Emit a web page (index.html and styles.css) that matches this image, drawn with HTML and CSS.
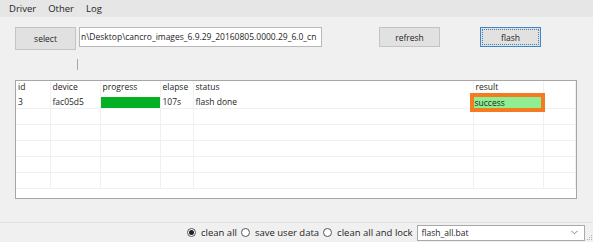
FILE: index.html
```html
<!DOCTYPE html>
<html lang="en">
<head>
<meta charset="UTF-8" />
<title>Flash Tool</title>
<link rel="stylesheet" href="styles.css">
</head>
<body>
  <div class="window">
    <div class="menubar">
      <span class="menu-item">Driver</span>
      <span class="menu-item">Other</span>
      <span class="menu-item">Log</span>
    </div>

    <div class="toolbar">
      <button class="btn btn-select">select</button>
      <div class="path-field">n\Desktop\cancro_images_6.9.29_20160805.0000.29_6.0_cn</div>
      <button class="btn btn-refresh">refresh</button>
      <button class="btn btn-flash">flash</button>
    </div>

    <div class="tick"></div>

    <div class="list">
      <table>
        <colgroup>
          <col class="c-id"><col class="c-device"><col class="c-progress"><col class="c-elapse"><col class="c-status"><col class="c-result"><col>
        </colgroup>
        <thead>
          <tr><th>id</th><th>device</th><th>progress</th><th>elapse</th><th>status</th><th>result</th><th></th></tr>
        </thead>
        <tbody>
          <tr>
            <td>3</td><td>fac05d5</td>
            <td><div class="bar"></div></td>
            <td>107s</td><td>flash done</td>
            <td><span class="result-ok">success</span></td><td></td>
          </tr>
          <tr class="empty"><td></td><td></td><td></td><td></td><td></td><td></td><td></td></tr>
          <tr class="empty"><td></td><td></td><td></td><td></td><td></td><td></td><td></td></tr>
          <tr class="empty"><td></td><td></td><td></td><td></td><td></td><td></td><td></td></tr>
          <tr class="empty"><td></td><td></td><td></td><td></td><td></td><td></td><td></td></tr>
          <tr class="empty"><td></td><td></td><td></td><td></td><td></td><td></td><td></td></tr>
        </tbody>
      </table>
    </div>

    <div class="spacer"></div>

    <div class="statusbar">
      <span class="radio checked"></span><span class="radio-label">clean all</span>
      <span class="radio"></span><span class="radio-label">save user data</span>
      <span class="radio"></span><span class="radio-label">clean all and lock</span>
      <div class="combo">
        <span>flash_all.bat</span>
        <svg class="chevron" viewBox="0 0 8 5"><path d="M0.5 0.5 L4 4 L7.5 0.5" fill="none" stroke="#777" stroke-width="1"/></svg>
      </div>
      <svg class="grip" viewBox="0 0 6 6">
        <rect x="4" y="0" width="1" height="1" fill="#b5b5b5"/>
        <rect x="2" y="2" width="1" height="1" fill="#b5b5b5"/>
        <rect x="4" y="2" width="1" height="1" fill="#b5b5b5"/>
        <rect x="0" y="4" width="1" height="1" fill="#b5b5b5"/>
        <rect x="2" y="4" width="1" height="1" fill="#b5b5b5"/>
        <rect x="4" y="4" width="1" height="1" fill="#b5b5b5"/>
      </svg>
    </div>
  </div>
</body>
</html>
```

FILE: styles.css
```css
body {
  margin: 0;
  background: #fff;
  font-family: "Open Sans", "Noto Sans", sans-serif;
  color: #1e1e1e;
}

.window {
  width: 593px;
  height: 242px;
  background: #f0f0f0;
  display: flex;
  flex-direction: column;
}

.menubar {
  height: 17px;
  background: #e6e6e6;
  display: flex;
  align-items: center;
  padding-left: 9px;
  font-size: 9.5px;
}

.menu-item {
  margin-right: 12px;
}

.toolbar {
  display: flex;
  align-items: flex-start;
  padding: 10px 0 0 15px;
}

.btn {
  font-family: inherit;
  font-size: 8.5px;
  color: #1e1e1e;
  background: #e1e1e1;
  border: 1px solid #c4c4c4;
  width: 61px;
  height: 20px;
  padding: 0;
}

.btn-select {
  height: 23px;
}

.path-field {
  margin-left: 3px;
  width: 243px;
  height: 20px;
  box-sizing: border-box;
  background: #fff;
  border: 1px solid #b9b9b9;
  font-size: 8.5px;
  line-height: 17px;
  padding-left: 1px;
  white-space: nowrap;
  overflow: hidden;
}

.btn-refresh {
  margin-left: 57px;
}

.btn-flash {
  margin-left: 40px;
  border: 1px solid #3d86cc;
  outline: 1px dotted #4d7fae;
  outline-offset: -3px;
}

.tick {
  width: 1px;
  height: 11px;
  background: #a8a8a8;
  margin: 9px 0 0 77px;
}

.list {
  margin: 10px 0 0 15px;
  width: 562px;
  height: 119px;
  box-sizing: border-box;
  background: #fff;
  border: 1px solid #a6a6a6;
  overflow: hidden;
}

table {
  width: 100%;
  border-collapse: collapse;
  table-layout: fixed;
  font-size: 8.5px;
}

.c-id { width: 34px; }
.c-device { width: 50px; }
.c-progress { width: 60px; }
.c-elapse { width: 33px; }
.c-status { width: 280px; }
.c-result { width: 70px; }

th, td {
  padding: 0 0 0 2px;
  text-align: left;
  font-weight: normal;
  border-right: 1px solid #f0f0f0;
  white-space: nowrap;
}

th {
  height: 12px;
  line-height: 12px;
  vertical-align: bottom;
}

td {
  height: 15px;
  line-height: 13px;
  border-bottom: 1px solid #f0f0f0;
  vertical-align: bottom;
}

.bar {
  height: 11px;
  margin: 0 0 0 -2px;
  width: 59px;
  background: #06b025;
}

.result-ok {
  display: block;
  width: 67px;
  height: 11px;
  line-height: 11px;
  margin-left: -2px;
  padding-left: 1px;
  box-sizing: border-box;
  background: #90ee90;
  outline: 4px solid #f57b20;
}

.spacer {
  flex: 1;
}

.statusbar {
  height: 19px;
  border-top: 1px solid #e2e2e2;
  display: flex;
  align-items: center;
  padding-left: 187px;
  font-size: 9.5px;
  position: relative;
}

.radio {
  width: 9px;
  height: 9px;
  border: 1px solid #555;
  border-radius: 50%;
  box-sizing: border-box;
  background: #fff;
  display: flex;
  align-items: center;
  justify-content: center;
  margin-right: 5px;
}

.radio.checked::after {
  content: "";
  width: 5px;
  height: 5px;
  border-radius: 50%;
  background: #222;
}

.radio-label {
  margin-right: 4px;
}

.combo {
  width: 168px;
  height: 16px;
  box-sizing: border-box;
  background: #fff;
  border: 1px solid #a9a9a9;
  display: flex;
  align-items: center;
  justify-content: space-between;
  padding: 0 6px 0 4px;
  font-size: 8.5px;
}

.chevron {
  width: 7px;
  height: 5px;
}

.grip {
  width: 6px;
  height: 6px;
  position: absolute;
  right: 0;
  bottom: 1px;
}
```
